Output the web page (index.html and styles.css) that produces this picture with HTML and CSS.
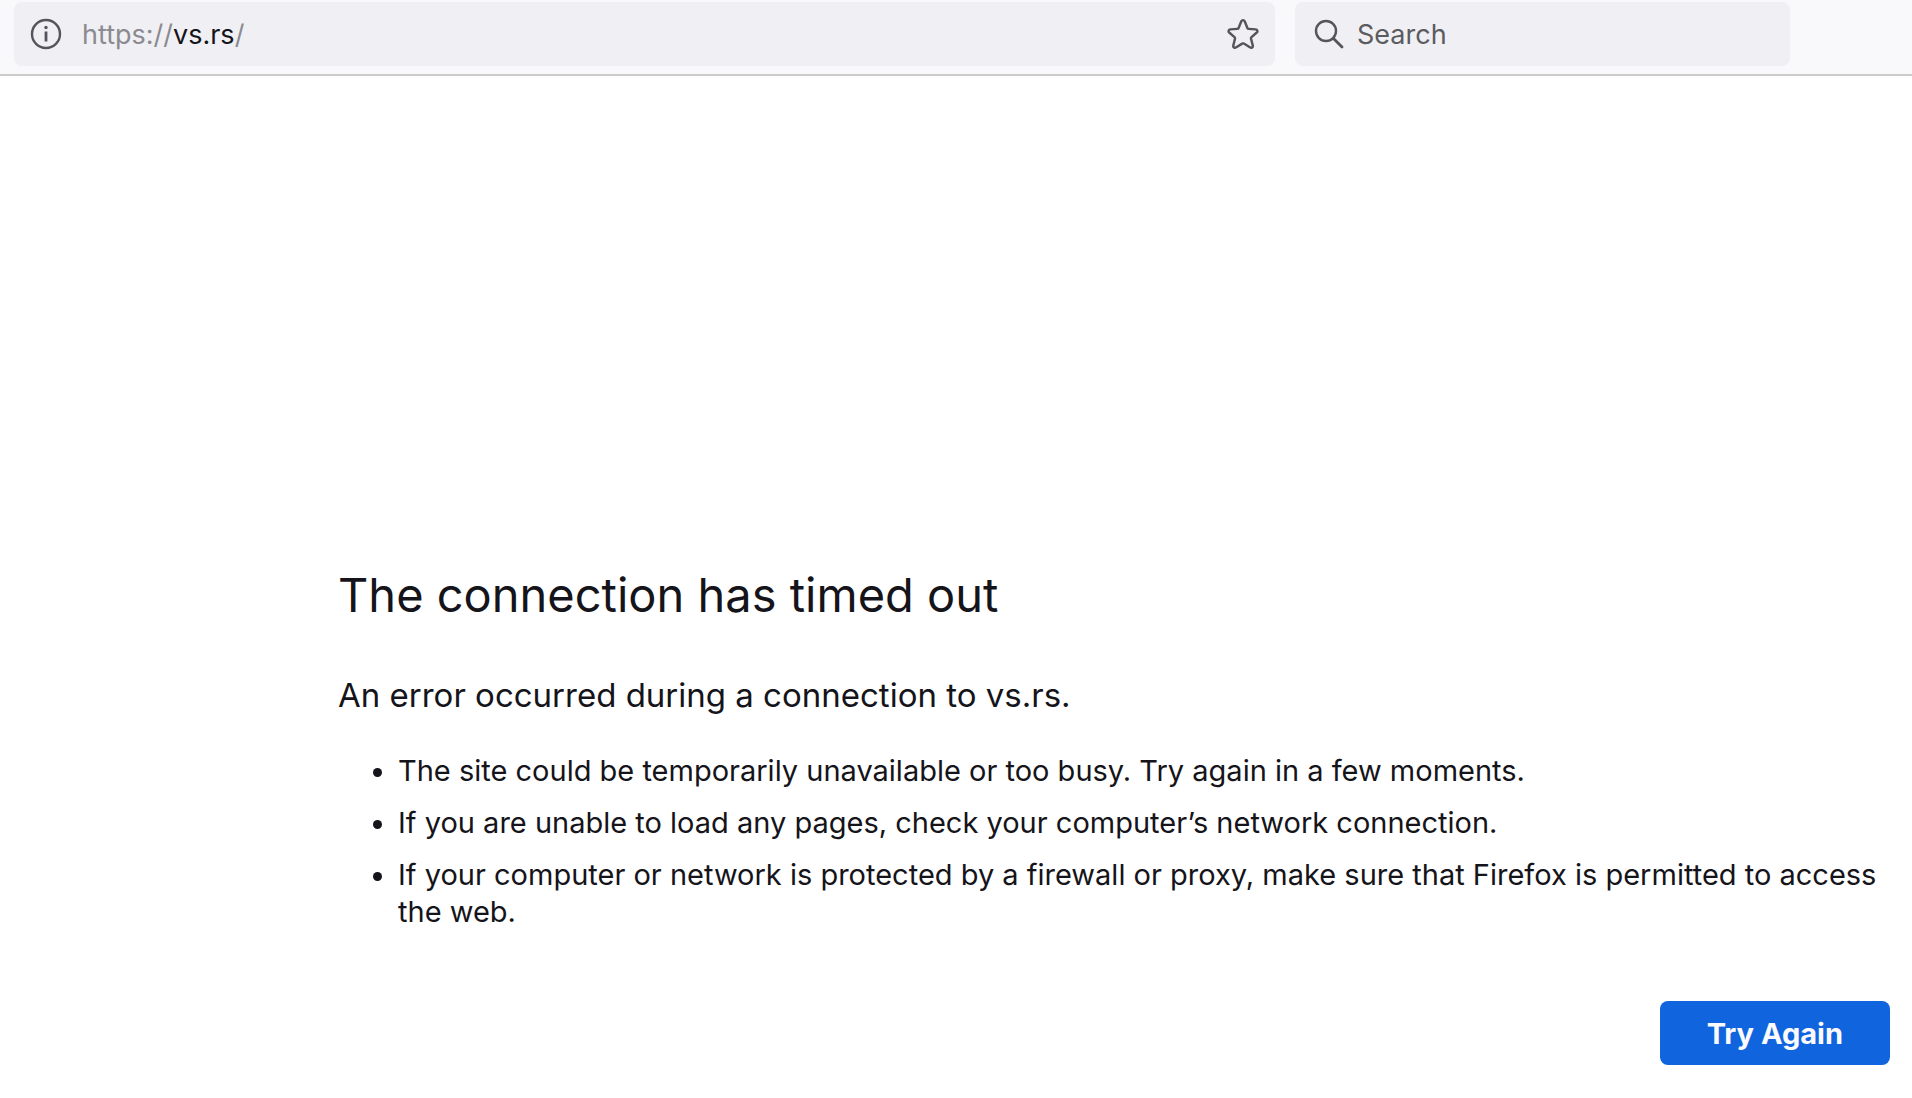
FILE: index.html
```
<!DOCTYPE html>
<html lang="en">
<head>
  <meta charset="UTF-8">
  <meta name="viewport" content="width=device-width, initial-scale=1.0">
  <title>Problem loading page</title>
  <link rel="stylesheet" href="styles.css">
</head>
<body>
  <header class="toolbar">
    <div class="field url-bar">
      <button class="icon-button" type="button" aria-label="Site information">
        <svg class="icon" viewBox="0 0 32 32" fill="none" stroke="currentColor" stroke-width="2.4">
          <circle cx="16" cy="16" r="14"/>
          <path d="M16 13.500v10" stroke-width="2.800"/>
          <circle cx="16" cy="9.500" r="1.700" fill="currentColor" stroke="none"/>
        </svg>
      </button>
      <label class="url">
        <span class="url-dim">https://</span>
        <input class="url-host" type="text" value="vs.rs" aria-label="Address" spellcheck="false">
        <span class="url-dim">/</span>
      </label>
      <button class="icon-button" type="button" aria-label="Bookmark this page">
        <svg class="icon" viewBox="0 0 32 32" fill="none" stroke="currentColor" stroke-width="2.4" stroke-linejoin="round">
          <path d="M14.300 3.200c.7-1.500 2.700-1.500 3.400 0l2.700 6.800c.2.600.7.900 1.300.9l7 .5c1.700.1 2.300 2 1.100 3.100l-5.300 4.600c-.4.400-.6 1-.5 1.500l1.800 7c.4 1.600-1.200 2.700-2.600 1.900l-6.300-3.900c-.5-.3-1.200-.3-1.700 0l-6.300 3.900c-1.400.8-3-.3-2.600-1.900l1.700-7c.1-.5-.1-1.100-.5-1.500l-5.300-4.600c-1.200-1.100-.6-3 1.100-3.100l7-.5c.6 0 1.100-.3 1.300-.9z"/>
        </svg>
      </button>
    </div>

    <div class="field search-bar">
      <svg class="icon" viewBox="0 0 32 32" fill="none" stroke="currentColor" stroke-width="2.4" stroke-linecap="round">
        <circle cx="13" cy="13" r="10"/>
        <path d="M20.500 20.500L29 29" stroke-width="2.800"/>
      </svg>
      <input class="search-input" type="search" placeholder="Search" aria-label="Search">
    </div>
  </header>

  <main class="error-page">
    <h1>The connection has timed out</h1>
    <p class="summary">An error occurred during a connection to vs.rs.</p>
    <ul class="hints">
      <li>The site could be temporarily unavailable or too busy. Try again in a few moments.</li>
      <li>If you are unable to load any pages, check your computer’s network connection.</li>
      <li>If your computer or network is protected by a firewall or proxy, make sure that Firefox is permitted to access the web.</li>
    </ul>
    <div class="actions">
      <button class="try-again" type="button">Try Again</button>
    </div>
  </main>
</body>
</html>
```
FILE: styles.css
```
* {
  box-sizing: border-box;
}

body {
  margin: 0;
  font-family: Inter, "Liberation Sans", sans-serif;
  font-size: 29px;
  color: #15141a;
  background: #fff;
}

button,
input {
  font: inherit;
  border: none;
}

/* Toolbar */
.toolbar {
  display: flex;
  gap: 20px;
  padding: 2px 122px 8px 14px;
  background: #f9f9fb;
  border-bottom: 2px solid #ccc;
}

.field {
  display: flex;
  align-items: center;
  height: 64px;
  padding: 0 16px;
  font-size: 27px;
  color: #5b5b66;
  background: #f0f0f4;
  border-radius: 8px;
}

.url-bar {
  flex: 1;
  gap: 20px;
}

.search-bar {
  flex: 0 1 495px;
  gap: 12px;
  min-width: 0;
  padding: 0 18px;
}

.icon {
  display: block;
  flex: none;
  width: 32px;
  height: 32px;
  color: #55545c;
}

.icon-button {
  padding: 0;
  background: none;
  cursor: pointer;
}

.url {
  display: flex;
  flex: 1;
  align-items: center;
}

.url-dim {
  color: #8a8a90;
}

.url-host {
  field-sizing: content;
  padding: 0;
  color: #15141a;
  background: none;
  outline: none;
}

.search-input {
  flex: 1;
  min-width: 0;
  padding: 0;
  color: #15141a;
  background: none;
  outline: none;
}

.search-input::placeholder {
  color: #5b5b60;
  opacity: 1;
}

/* Error page */
.error-page {
  padding: 484px 22px 32px 338px;
}

h1 {
  margin: 0 0 45px;
  font-size: 47px;
  font-weight: 400;
  line-height: 70px;
}

.summary {
  margin: 0 0 37px;
  font-size: 33px;
  line-height: 40px;
}

.hints {
  margin: 0;
  padding-left: 60px;
  line-height: 37px;
}

.hints li {
  margin-bottom: 15px;
}

.actions {
  display: flex;
  justify-content: flex-end;
  margin-top: 71px;
}

.try-again {
  height: 64px;
  padding: 0 47px;
  font-weight: 700;
  color: #fbfbfe;
  background: #1065de;
  border-radius: 8px;
  cursor: pointer;
}

.try-again:hover {
  background: #0250bb;
}
```
